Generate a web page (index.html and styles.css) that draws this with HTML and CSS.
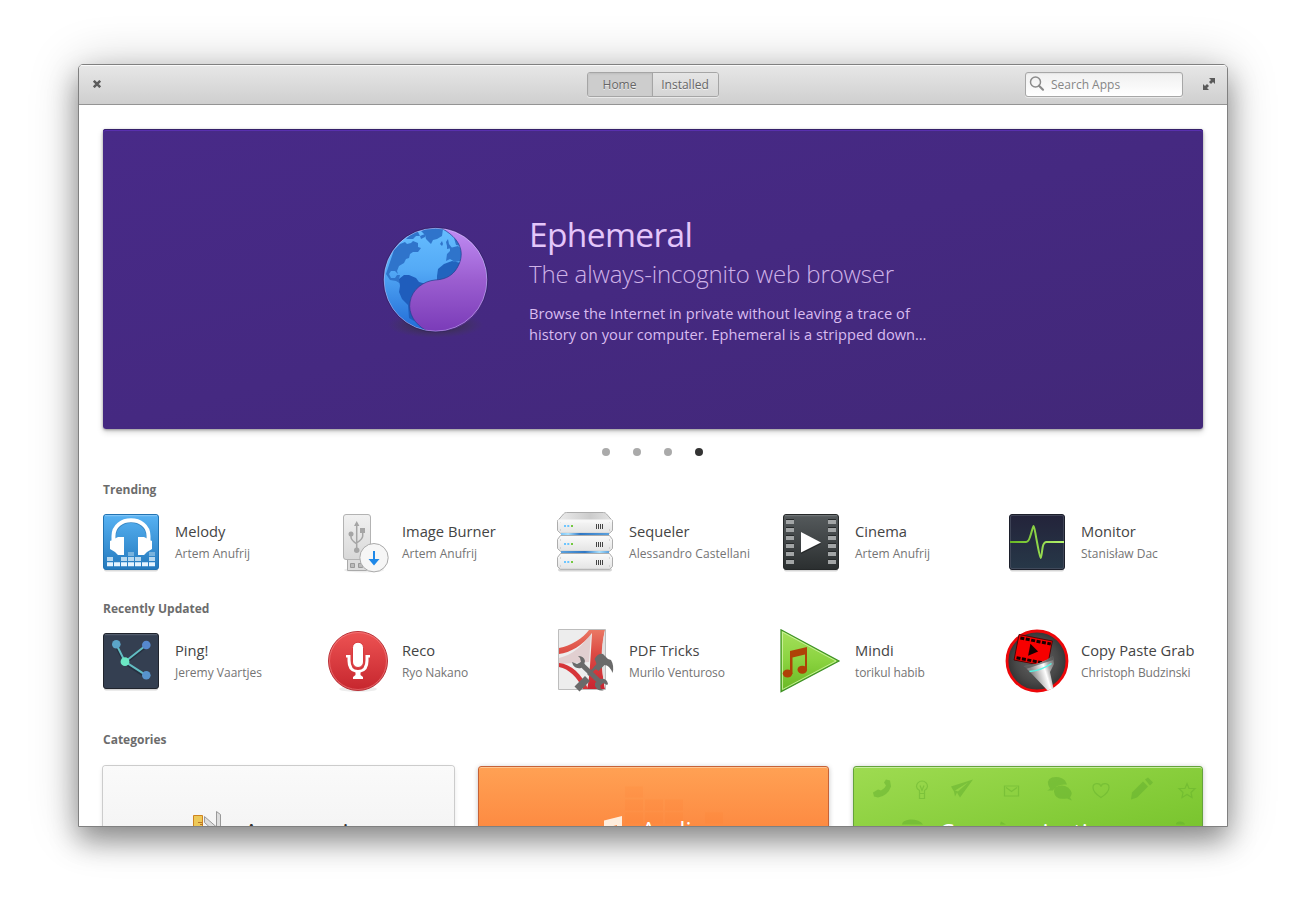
FILE: index.html
```html
<!DOCTYPE html>
<html lang="en">
<head>
<meta charset="utf-8">
<title>AppCenter</title>
<link rel="stylesheet" href="styles.css">
</head>
<body>
<div class="window">
  <header class="headerbar">
    <svg class="close" width="8" height="8" viewBox="0 0 8 8"><path d="M.8.800 7.200 7.200M7.200.800.800 7.200" stroke="#5c5c5c" stroke-width="2.500"/></svg>
    <nav class="switcher"><span class="tab active">Home</span><span class="tab">Installed</span></nav>
    <div class="tools">
      <div class="search">
        <svg width="16" height="16" viewBox="0 0 16 16" fill="none" stroke="#8b8b8b"><circle cx="6.500" cy="6" r="5" stroke-width="1.500"/><path d="m10 9.700 4 4" stroke-width="2.200" stroke-linecap="round"/></svg>
        <span>Search Apps</span>
      </div>
      <svg class="expand" width="12" height="12" viewBox="0 0 12 12" fill="#5a5a5a"><path d="M6 0h6v6L10 4 8 6 6 4 8 2zM6 12H0V6l2 2 2-2 2 2-2 2z"/></svg>
    </div>
  </header>
  <main class="content">
    <section class="hero">
      <svg width="128" height="128" viewBox="0 0 128 128">
        <defs>
          <linearGradient id="blue" x1="0" y1="0" x2="0" y2="1"><stop stop-color="#66bdff"/><stop offset=".4" stop-color="#54aaf6"/><stop offset="1" stop-color="#206bd6"/></linearGradient>
          <linearGradient id="violet" x1="0" y1="0" x2="0" y2="1"><stop stop-color="#c08cf4"/><stop offset=".5" stop-color="#9b5ed0"/><stop offset="1" stop-color="#7a3bb8"/></linearGradient>
          <radialGradient id="shade"><stop stop-color="#222" stop-opacity=".9"/><stop offset="1" stop-color="#444" stop-opacity="0"/></radialGradient>
          <clipPath id="globe"><circle cx="63.500" cy="63.700" r="51.500"/></clipPath>
        </defs>
        <ellipse cx="63.500" cy="109" rx="48" ry="13" fill="url(#shade)"/>
        <circle cx="63.500" cy="63.700" r="51.500" fill="url(#blue)"/>
        <g clip-path="url(#globe)" fill="#2f74cb">
          <path d="M22 34l6-6 5-2 2 2 4-1 2-2 5 2 0 4 3 1-3 4-5 0-3 2-1 4-3 1-2 4-5 3-2 5 1 3-3-3-4 0-2 3 2 4 4 0 2-3 3 0-1 4 5 1 1 5-4-1-5-3-6-1-4-6z"/>
          <path d="M34 23l7-7 5 0 2 4 5-2 0 3-4 2-1-3-4 0-3 3zM49 15l5-2 10-1 7 1-1 7-5 3-4 1-2 4-5-5-1-4z"/>
          <path d="M27 63l5-4 5 0 7 3 3 4 7 2 3 2-2 5-5 7-4 4-3 5-1 14-5-3-1-13-6-6-3-7 1-6z" fill="#1f5dbc"/>
          <path d="M68 28l2-3 1 3-1 2zM74 26l2-3 1 5 3 4-5 1 0-3zM82 22l4 2 3 6-5-1zM75 38l3-3 0-3 8-2 6 5 1 14-5-4-5 1-5-3-4 2z"/>
          <path d="M65 60l1-7 6-5 8-3 9 2 4 5-7 10-10 9-8 1-3-5z" fill="#2164be"/>
        </g>
        <path d="M70 12.500C94 26 92 43 83 55 78 61 72 63.500 63 64 52 65 40 73 38 86c-2 12 5 22 16 28.500C88 121 115 97 115 64 115 36 94 14 70 12.500z" fill="url(#violet)"/>
        <path d="M70 12.500C94 26 92 43 83 55 78 61 72 63.500 63 64 52 65 40 73 38 86c-2 12 5 22 16 28.500" fill="none" stroke="#233e8c" stroke-opacity=".7"/>
        <circle cx="63.500" cy="63.700" r="51.500" fill="none" stroke="#d8c9ff" stroke-opacity=".5"/>
        <circle cx="63.500" cy="63.700" r="52.300" fill="none" stroke="#261b55" stroke-opacity=".5"/>
      </svg>
      <div class="hero-text">
        <h1>Ephemeral</h1>
        <h2>The always-incognito web browser</h2>
        <p>Browse the Internet in private without leaving a trace of<br>history on your computer. Ephemeral is a stripped down…</p>
      </div>
    </section>
    <div class="dots"><i></i><i></i><i></i><i class="on"></i></div>

    <h3>Trending</h3>
    <section class="apps">
      <article class="app">
        <svg width="64" height="64" viewBox="0 0 64 64">
          <defs><linearGradient id="mel" x1="0" y1="0" x2="0" y2="1"><stop stop-color="#57b2f3"/><stop offset="1" stop-color="#2479bd"/></linearGradient></defs>
          <rect x="5" y="58" width="54" height="3.500" rx="2" fill="#000" opacity=".14"/>
          <rect x="4.500" y="4.500" width="55" height="55" rx="2.500" fill="url(#mel)" stroke="#2273b2"/>
          <path d="M6 5.700h52" stroke="#8ccbf8"/>
          <path d="M15 30V25a17 15 0 0 1 34 0v5" fill="none" stroke="#1c5b8e" stroke-opacity=".4" stroke-width="4" transform="translate(0 1)"/>
          <path d="M14.500 30V26c0-21 35-21 35 0v4" fill="none" stroke="#fff" stroke-width="4"/>
          <path d="M11 31l8-4h6v18h-6l-3-3-5-3zM53 31l-8-4h-6v18h6l3-3 5-3z" fill="#fff"/>
          <path d="M8 54.200h48.500" stroke="#e5f4ff" stroke-width="4" stroke-dasharray="6 1"/>
          <path d="M8 49h6m8 0h6m1 0h6m1 0h6m8 0h6" stroke="#b7d8ef" stroke-width="4"/>
          <path d="M29 44h6m15 0h6" stroke="#79b3dd" stroke-width="4"/>
        </svg>
        <div class="label"><b>Melody</b><span>Artem Anufrij</span></div>
      </article>
      <article class="app">
        <svg width="64" height="64" viewBox="0 0 64 64">
          <defs><linearGradient id="usb" x1="0" y1="0" x2="0" y2="1"><stop stop-color="#f1f1f1"/><stop offset="1" stop-color="#d8d8d8"/></linearGradient></defs>
          <ellipse cx="38" cy="60" rx="20" ry="2.500" fill="#000" opacity=".07"/>
          <path d="M21.500 49h19v11.500h-19z" fill="#ddd" stroke="#aaa"/><path d="M24.500 53.500h4v4h-4zm8 0h4v4h-4z" fill="#bbb" stroke="#999"/>
          <rect x="17.500" y="4.500" width="27" height="45" rx="2.500" fill="url(#usb)" stroke="#b3b3b3"/>
          <g stroke="#a5a5a5" stroke-width="1.500" fill="none"><path d="M30.700 13v27M25 24v3q0 3 5.700 7M36.700 21v5q0 3-6 7"/></g>
          <g fill="#a5a5a5"><path d="M28 16l2.700-5 2.700 5z"/><circle cx="25" cy="24" r="2.500"/><path d="M34 18h5v5h-5z"/><circle cx="30.700" cy="40.300" r="2.700"/></g>
          <circle cx="48" cy="47.700" r="14.200" fill="#f6f6f6" stroke="#aaa"/>
          <path d="M47 41h2v8h4.500L48 55.500 42.500 49H47z" fill="#1e88e8"/>
        </svg>
        <div class="label"><b>Image Burner</b><span>Artem Anufrij</span></div>
      </article>
      <article class="app">
        <svg width="64" height="64" viewBox="0 0 64 64">
          <defs>
            <linearGradient id="srv" x1="0" y1="0" x2="0" y2="1"><stop stop-color="#fafafa"/><stop offset="1" stop-color="#e4e4e4"/></linearGradient>
            <linearGradient id="lid" x1="0" y1="0" x2="1" y2="0"><stop stop-color="#ececec"/><stop offset=".6" stop-color="#ccc"/><stop offset="1" stop-color="#e4e4e4"/></linearGradient>
            <linearGradient id="glow1"><stop stop-color="#7cc4f6"/><stop offset=".15" stop-color="#a8e0ff"/><stop offset=".4" stop-color="#2f77c4"/><stop offset="1" stop-color="#5ba0dc"/></linearGradient>
            <linearGradient id="glow2"><stop stop-color="#5ba0dc"/><stop offset=".5" stop-color="#2f77c4"/><stop offset=".8" stop-color="#a8e0ff"/><stop offset="1" stop-color="#5ba0dc"/></linearGradient>
            <g id="unit"><path d="M7.500 7.500h49l3 4v9l-3 2.800h-49l-3-2.800v-9z" fill="url(#srv)" stroke="#adadad" stroke-linejoin="round"/><path d="M11 16h2m1.300 0h2" stroke="#6cc5ff" stroke-width="2"/><path d="M18 16h2" stroke="#73c940" stroke-width="2"/><path d="M43.500 14v5m2-5v5m2-5v5m2-5v5" stroke="#444"/><path d="M7 12h1m48 0h1M7 20h1m48 0h1" stroke="#bbb"/></g>
          </defs>
          <rect x="5" y="58" width="54" height="3.500" rx="2" fill="#000" opacity=".16"/>
          <use href="#unit"/><use href="#unit" y="18"/><use href="#unit" y="36"/>
          <path d="M4.500 11l6-7q1-1.500 3-1.500h37q2 0 3 1.500l6 7z" fill="url(#lid)" stroke="#adadad"/><path d="M5 9.500h54v3H5z" fill="#f7f7f7"/>
          <path d="M8 23h48v2H8z" fill="url(#glow1)"/><path d="M8 41h48v2H8z" fill="url(#glow2)"/>
        </svg>
        <div class="label"><b>Sequeler</b><span class="wide">Alessandro Castellani</span></div>
      </article>
      <article class="app">
        <svg width="64" height="64" viewBox="0 0 64 64">
          <defs><linearGradient id="cin" x1="0" y1="0" x2="0" y2="1"><stop stop-color="#555a5c"/><stop offset="1" stop-color="#2b2f30"/></linearGradient></defs>
          <rect x="5" y="58" width="54" height="3.500" rx="2" fill="#000" opacity=".16"/>
          <rect x="4.500" y="4.500" width="55" height="55" rx="2.500" fill="url(#cin)" stroke="#252829"/><path d="M6 5.700h52" stroke="#777c7e"/>
          <path d="M11 9v48M53 9v48" stroke="#26292a" stroke-width="8" stroke-dasharray="4 4"/>
          <path d="M11 10v44M53 10v44" stroke="#a2a5a6" stroke-width="8" stroke-dasharray="4 4"/>
          <path d="M22 23v21l20-10z" fill="#000" opacity=".35"/><path d="M22 22v20.500l20-10z" fill="#fff"/>
        </svg>
        <div class="label"><b>Cinema</b><span>Artem Anufrij</span></div>
      </article>
      <article class="app">
        <svg width="64" height="64" viewBox="0 0 64 64">
          <defs><linearGradient id="mon" x1="0" y1="0" x2="0" y2="1"><stop stop-color="#23233a"/><stop offset="1" stop-color="#273848"/></linearGradient><linearGradient id="pulse" gradientUnits="userSpaceOnUse" x1="5" x2="59" y1="0" y2="0"><stop stop-color="#68b723"/><stop offset="1" stop-color="#b5f36e"/></linearGradient></defs>
          <rect x="5" y="58" width="54" height="3.500" rx="2" fill="#000" opacity=".16"/>
          <rect x="4.500" y="4.500" width="55" height="55" rx="2.500" fill="url(#mon)" stroke="#1c1f2b"/><rect x="5.500" y="5.500" width="53" height="53" rx="1.500" fill="none" stroke="#4c5162" stroke-opacity=".7"/>
          <path d="M5 32h16c2 0 3-2 4-5 2-6 3-11 3.500-11 1 0 1.500 6 3.500 16 2 11 3 16 3.700 16s1-5 2-11c.8-4 1.800-5 4-5H59" fill="none" stroke="url(#pulse)" stroke-width="2"/>
        </svg>
        <div class="label"><b>Monitor</b><span>Stanisław Dac</span></div>
      </article>
    </section>

    <h3 class="recent">Recently Updated</h3>
    <section class="apps">
      <article class="app">
        <svg width="64" height="64" viewBox="0 0 64 64">
          <rect x="5" y="58" width="54" height="3.500" rx="2" fill="#000" opacity=".16"/>
          <rect x="4.500" y="4.500" width="55" height="55" rx="2.500" fill="#343f51" stroke="#20242d"/><path d="M6 5.700h52" stroke="#596373"/>
          <path d="M17.300 17 26 34l21.300-17M26 34l21.300 14" fill="none" stroke="#1c2735" stroke-opacity=".6" stroke-width="3"/>
          <path d="M17.300 15.300 26 32.700 47.300 16M26 32.700l21.300 13.600" fill="none" stroke="#62bdc3" stroke-width="2"/>
          <circle cx="17.300" cy="15.300" r="4.300" fill="#5ba5c8"/><circle cx="47.300" cy="16" r="4.300" fill="#5688ce"/><circle cx="47.300" cy="46.300" r="4.300" fill="#5793cc"/><circle cx="26" cy="32.700" r="4.400" fill="#6be8c4"/>
        </svg>
        <div class="label"><b>Ping!</b><span>Jeremy Vaartjes</span></div>
      </article>
      <article class="app">
        <svg width="64" height="64" viewBox="0 0 64 64">
          <defs><linearGradient id="reco" x1="0" y1="0" x2="0" y2="1"><stop stop-color="#ed5353"/><stop offset="1" stop-color="#c6262e"/></linearGradient></defs>
          <ellipse cx="32" cy="60" rx="19" ry="3" fill="#000" opacity=".07"/>
          <circle cx="32" cy="32" r="29.500" fill="url(#reco)" stroke="#b83238"/><circle cx="32" cy="32" r="28.500" fill="none" stroke="#ff9b9b" stroke-opacity=".45"/>
          <path d="M20 26h4.500v5q0 10 7.500 10t7.500-10v-5H44v2.500h-1.500V32q0 10-8 11.500V46l2.500 2v2H27v-2l2.500-2v-2.500q-8-1.500-8-11.500v-3.500H20z" fill="#fff"/>
          <rect x="26.500" y="13.200" width="11" height="25.300" rx="5.500" fill="#fff" stroke="#d9393d"/>
        </svg>
        <div class="label"><b>Reco</b><span class="tight">Ryo Nakano</span></div>
      </article>
      <article class="app">
        <svg width="64" height="64" viewBox="0 0 64 64">
          <defs><linearGradient id="pdf" x1="0" y1="0" x2="0" y2="1"><stop stop-color="#ea7864"/><stop offset=".4" stop-color="#dc4a43"/><stop offset="1" stop-color="#c92531"/></linearGradient></defs>
          <path d="M5.500.500h47v60h-47z" fill="#ededed" stroke="#bdbdbd"/>
          <path d="M6 29C19 26 30 17 38 4l-2 29-30 2z" fill="#e1cfd0"/>
          <path d="M6 19C18 17 30 9 36 1h16C48 20 48 40 52 60H34C36 54 37 40 39 4 30 16 17 24 6 25z" fill="url(#pdf)"/>
          <path d="M6 34c12 1 23 11 29 26h-5C24 48 16 40 6 38z" fill="#d63438"/>
          <path d="M52 1C47 20 48 40 52 60z" fill="#e1e1e1"/>
          <g fill="none" stroke="#6a6a6a"><path d="M24 60 34.500 49.500" stroke-width="7"/><path d="M35 46l7.500-7.500" stroke-width="2.500"/><path d="M27 34 49 55" stroke-width="5"/></g>
          <g fill="#6a6a6a"><path d="M40.500 38.500l3-3.500-1-3-1-2q3.500-6 8.500-5l5 5 3 1q3.500 6 1.500 13-3-8-8-8l-6 6z"/><path d="M25 27q6 0 7 5l-1 4-3 3q-5 1-8-3l-1-3 5 2 4-2-1-4zM47 50q7-1 8 5l-1 1-4-2-3 2 1 4 3 1q-6 2-9-4v-3z"/></g>
        </svg>
        <div class="label"><b>PDF Tricks</b><span class="tight">Murilo Venturoso</span></div>
      </article>
      <article class="app">
        <svg width="64" height="64" viewBox="0 0 64 64">
          <defs><linearGradient id="min" x1="0" y1="0" x2="0" y2="1"><stop stop-color="#a5e05c"/><stop offset=".5" stop-color="#8ad33f"/><stop offset="1" stop-color="#68b723"/></linearGradient></defs>
          <path d="M2 .800v62L60 32z" fill="url(#min)" stroke="#3e9126" stroke-width="1.200"/><path d="M3.500 3v57.500L57 32z" fill="none" stroke="#d3f5a9" stroke-opacity=".8"/>
          <g fill="#af4207"><ellipse cx="8.500" cy="44.500" rx="4.800" ry="4"/><ellipse cx="23.300" cy="40.700" rx="4.800" ry="4"/><path d="M11 22l17-4v23h-2V25.500l-12.500 3V45H11z"/></g>
        </svg>
        <div class="label"><b>Mindi</b><span class="tight">torikul habib</span></div>
      </article>
      <article class="app">
        <svg width="64" height="64" viewBox="0 0 64 64">
          <defs><linearGradient id="fun" gradientUnits="userSpaceOnUse" x1="27" y1="44" x2="50" y2="37"><stop stop-color="#8a8a8a"/><stop offset=".35" stop-color="#d5d5d5"/><stop offset=".55" stop-color="#fff"/><stop offset=".75" stop-color="#aaa"/><stop offset="1" stop-color="#777"/></linearGradient><radialGradient id="disc"><stop stop-color="#666"/><stop offset=".7" stop-color="#484848"/><stop offset="1" stop-color="#343434"/></radialGradient></defs>
          <circle cx="32" cy="32" r="30" fill="url(#disc)" stroke="#ed0609" stroke-width="2.800"/>
          <g transform="translate(14 5.500) rotate(11)"><path d="M0 0h34v26H0z" fill="#f60000" stroke="#400" stroke-width=".8"/><path d="M2 3.200h31M2 23.300h31" stroke="#170000" stroke-width="3" stroke-dasharray="4 1.500"/><path d="M13 7v12l9-6z" fill="#160000"/></g>
          <path d="M19 37q16-1 29-10l1 8-4 8 3.500 16.500-6 2L25 43z" fill="url(#fun)"/><path d="M19 37q16-1 29-10l0 4-27 9z" fill="#4b4949" opacity=".65"/><path d="M24.500 42.500q12-1 22-8" fill="none" stroke="#55f5e5" stroke-width="1.500"/>
        </svg>
        <div class="label"><b>Copy Paste Grab</b><span class="tight">Christoph Budzinski</span></div>
      </article>
    </section>

    <h3 class="cat-title">Categories</h3>
    <section class="categories">
      <div class="card accessories">
        <svg width="64" height="64" viewBox="0 0 64 64"><path d="M17.500 13.500h9v40h-9z" fill="#edc958" stroke="#cf8420"/><path d="M22 20.500h4M24 22.500h3" stroke="#b8732a"/><path d="M28.500 14.500v6l20 18V32zM40.500 9.500l4 3v40h-4z" fill="#ddd" stroke="#999"/></svg>
        <span>Accessories</span>
      </div>
      <div class="card audio">
        <svg class="pattern" width="351" height="60" viewBox="0 0 351 60"><path d="M146 25h18M146 38h18m2 0h18m2 0h18M146 51h18m2 0h18m2 0h18m22 0h18" stroke="#ff7126" stroke-opacity=".09" stroke-width="11"/></svg>
        <svg width="40" height="40" viewBox="0 0 40 40"><path d="M9 8.500 27 4v28h-5V13l-9 2.500V37H9z" fill="#ffeddc"/></svg>
        <span>Audio</span>
      </div>
      <div class="card communication">
        <svg class="pattern" width="350" height="60" viewBox="1 1.500 350 60" fill="#62ad2d" fill-opacity=".5">
          <path d="M33 14l4 1 1 6q-3 9-13 11l-4-1-1-4 5-3 3 1q4-2 5-5l-2-3z"/>
          <g fill="none" stroke="#62ad2d" stroke-opacity=".45" stroke-width="1.200"><path d="M66.500 28v-3q-3-2-3-4a5 5 0 1 1 11 0q0 2-3 4v8h-5v-5h5M67 20l2 5 2-5"/><path d="M151.500 20.500h14v10h-14zM153 22l5.500 4 5.500-4"/><path d="M248 32q-8-5-8-10c0-5 7-5 8-1 1-4 8-4 8 1q0 5-8 10z"/><path d="M334 18l2 5 6 0-4 4 1 5-5-3-5 3 1-5-4-4 6 0z"/></g>
          <path fill-rule="evenodd" d="M98 21l22-7-13 18-3-5-2 4-1-5zM102 25l13-8-10 9z"/>
          <path d="M197 23q-5-8 2-11 8-2 13 3l2 4q-11-1-14 6-5 0-6 0 3-1 3-2z"/><path d="M202 22q7-4 13 0 6 5 2 10l2 3-5-2q-12 2-13-7 0-3 1-4z"/>
          <path d="M278 34l1-7 11-11 5 5-11 11zM292 14l3-2 5 5-3 3z"/>
          <path d="M49 59q0-4 8-5 10 0 13 5zM147 59l1-3 5 3zM323 59q0-3 4-3t5 3z"/>
        </svg>
        <span>Communication</span>
      </div>
    </section>
  </main>
</div>
</body>
</html>
```
FILE: styles.css
```css
* { box-sizing: border-box; }
body { margin: 0; padding: 64px 78px; height: 919px; overflow: hidden; background: #fff; font-family: "Open Sans", sans-serif; }
svg { display: block; flex: none; }
.window { width: 1150px; height: 763px; overflow: hidden; border: 1px solid #808080; border-radius: 5px 5px 0 0; background: #fff; box-shadow: 0 14px 28px rgba(0,0,0,.38), 0 2px 50px rgba(0,0,0,.22); }
.headerbar { height: 40px; display: grid; grid-template-columns: 1fr auto 1fr; align-items: center; padding: 0 12px 0 14px; background: linear-gradient(#e7e7e7, #cfcfcf); border-bottom: 1px solid #949494; box-shadow: inset 0 1px #fafafa; }
.switcher { display: flex; height: 25px; margin: 0 3px 1px 0; border: 1px solid #a5a5a5; border-radius: 3px; box-shadow: 0 1px rgba(255,255,255,.5); overflow: hidden; }
.tab { width: 65px; text-align: center; font-size: 12px; line-height: 24px; color: #666; text-shadow: 0 1px rgba(255,255,255,.7); background: linear-gradient(#e5e5e5, #d5d5d5); }
.tab.active { border-right: 1px solid #a5a5a5; background: #cdcdcd; box-shadow: inset 0 1px 2px rgba(0,0,0,.08); }
.tools { display: flex; justify-content: flex-end; align-items: center; gap: 20px; }
.search { width: 158px; height: 25px; display: flex; align-items: center; gap: 6px; margin-bottom: 1px; padding-left: 3px; border: 1px solid #a7a7a7; border-radius: 3px; background: linear-gradient(#f0f0f0, #fff); box-shadow: inset 0 1px 1px rgba(0,0,0,.05), 0 1px rgba(255,255,255,.5); color: #868686; font-size: 12px; }
.close, .expand { margin-bottom: 1px; }
.content { padding: 24px; }
.hero { height: 300px; display: flex; padding: 87px 0 0 269px; gap: 29px; border-radius: 3px; color: #e4c6fa; background: linear-gradient(165deg, #482a88, #452981 50%, #422878); box-shadow: inset 0 1px #352069, inset 0 2px #5930af, 0 1px 3px rgba(0,0,0,.35), 0 3px 6px rgba(0,0,0,.16); }
.hero-text { white-space: nowrap; }
h1 { margin: -7px 0 0; font-size: 33.500px; letter-spacing: -.63px; font-weight: 400; line-height: 50px; }
h2 { margin: 0; font-size: 24px; letter-spacing: -.14px; font-weight: 300; line-height: 30px; color: #cfb2e8; }
.hero p { margin: 14px 0 0; font-size: 14.600px; letter-spacing: .05px; line-height: 21px; color: #d9bcf0; }
.dots { display: flex; justify-content: center; gap: 23px; height: 8px; margin: 19px 2px 0 0; }
.dots i { width: 8px; height: 8px; border-radius: 50%; background: #aaa; }
.dots .on { background: #333; }
h3 { margin: 24px 0 0; height: 20px; font-size: 12px; line-height: 20px; font-weight: 700; color: #6c6c6c; }
.apps { display: grid; grid-template-columns: 227px 227px 226px 226px 226px; margin: 10px -4px 0; height: 64px; }
.app { display: flex; gap: 12px; white-space: nowrap; }
.label { padding-top: 10px; }
.label b, .label span { display: block; }
.label b { font-size: 14.700px; line-height: 22px; font-weight: 400; color: #444; }
.label span { margin-top: 2px; font-size: 12px; line-height: 20px; color: #747474; }
.label .wide { letter-spacing: .08px; }
.label .tight { letter-spacing: -.1px; }
.recent { margin-top: 25px; }
.cat-title { margin-top: 37px; }
.categories { display: grid; grid-template-columns: 351px 351px 350px; gap: 24px; margin-top: 16px; }
.card { position: relative; display: flex; justify-content: center; align-items: center; height: 136px; border-radius: 3px; font-size: 24px; box-shadow: 0 1px 5px rgba(0,0,0,.24); }
.pattern { position: absolute; left: 0; top: 0; }
.card span { position: relative; padding-bottom: 5px; }
.accessories { gap: 4px; color: #333; padding-right: 8px; background: linear-gradient(#fafafa, #eee); box-shadow: 0 0 0 1px #ccc, 0 2px 5px rgba(0,0,0,.15); }
.audio { gap: 6px; padding: 0 6px 4px 0; color: #fff; background: linear-gradient(#ffa154, #fd8c43 42%, #f37329); border: 1px solid #c66237; box-shadow: inset 0 1px #ffc48f, 0 1px 5px rgba(0,0,0,.24); }
.communication { color: #fff; background: linear-gradient(165deg, #9edb51, #80c934 55%, #68b723); border: 1px solid #65a33c; box-shadow: inset 0 1px #c8eda0, 0 1px 5px rgba(0,0,0,.24); }
```
